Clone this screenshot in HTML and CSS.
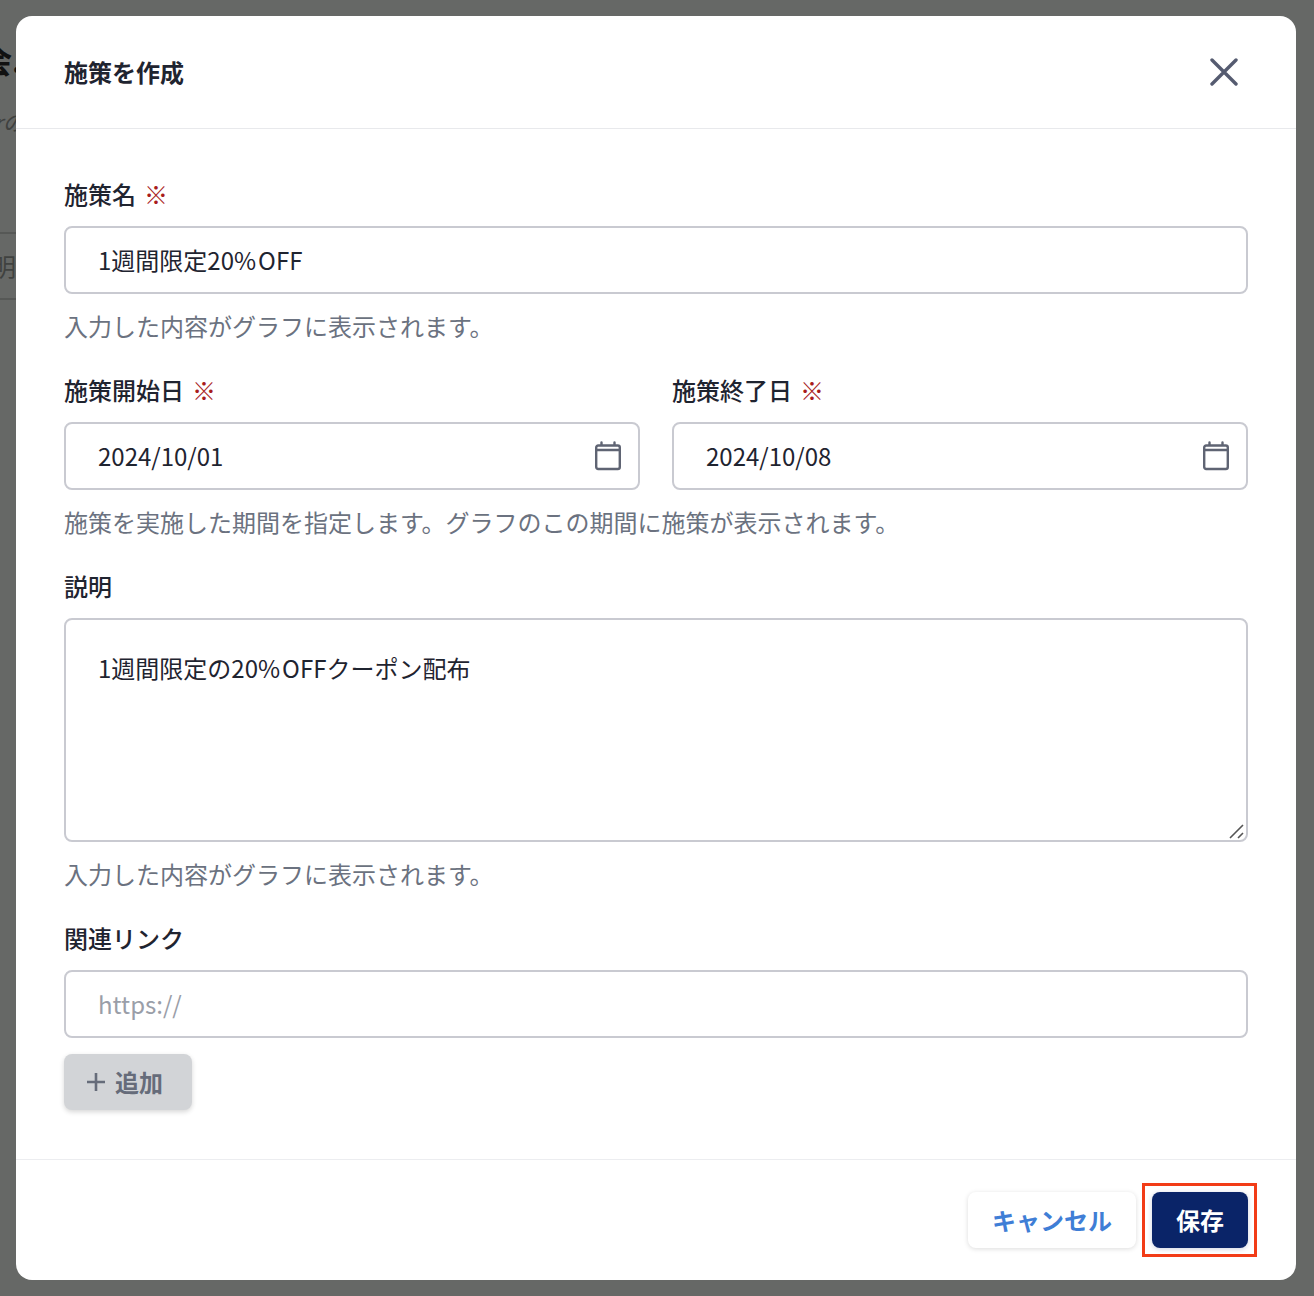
FILE: index.html
```html
<!DOCTYPE html>
<html lang="ja">
<head>
<meta charset="utf-8">
<title>施策を作成</title>
<link rel="stylesheet" href="styles.css">
</head>
<body>
<div class="backdrop">
  <span class="bg-title">会.</span>
  <span class="bg-note">rの</span>
  <div class="bg-row"><span>明</span></div>
</div>
<div class="modal-wrap">
  <div class="modal">
    <header class="modal-head">
      <h1 class="modal-title">施策を作成</h1>
      <svg class="close-icon" viewBox="0 0 28 28" width="28" height="28"><path d="M2 2 L26 26 M26 2 L2 26"/></svg>
    </header>
    <main class="modal-body">
      <section class="field">
        <div class="label">施策名<span class="req">※</span></div>
        <div class="input">1週間限定20<span class="pct">%</span>OFF</div>
        <p class="help">入力した内容がグラフに表示されます。</p>
      </section>
      <section class="field">
        <div class="date-row">
          <div class="date-col">
            <div class="label">施策開始日<span class="req">※</span></div>
            <div class="input input-date">2024/10/01
              <svg class="cal-icon" viewBox="0 0 28 30" width="28" height="30"><path d="M2.2 9V6.5a2 2 0 0 1 2-2h19.6a2 2 0 0 1 2 2V26a2 2 0 0 1-2 2H4.2a2 2 0 0 1-2-2V9h23.6M7.5 1.5v3M20.5 1.5v3"/></svg>
            </div>
          </div>
          <div class="date-col">
            <div class="label">施策終了日<span class="req">※</span></div>
            <div class="input input-date">2024/10/08
              <svg class="cal-icon" viewBox="0 0 28 30" width="28" height="30"><path d="M2.2 9V6.5a2 2 0 0 1 2-2h19.6a2 2 0 0 1 2 2V26a2 2 0 0 1-2 2H4.2a2 2 0 0 1-2-2V9h23.6M7.5 1.5v3M20.5 1.5v3"/></svg>
            </div>
          </div>
        </div>
        <p class="help">施策を実施した期間を指定します。グラフのこの期間に施策が表示されます。</p>
      </section>
      <section class="field">
        <div class="label">説明</div>
        <div class="input textarea">1週間限定の20<span class="pct">%</span>OFFクーポン配布
          <svg class="grip" viewBox="0 0 16 16" width="16" height="16"><path d="M1 15 L14 2 M9 15 L14 10"/></svg>
        </div>
        <p class="help">入力した内容がグラフに表示されます。</p>
      </section>
      <section class="field">
        <div class="label">関連リンク</div>
        <div class="input placeholder">https://</div>
        <button class="add-btn" type="button">
          <svg class="plus-icon" viewBox="0 0 20 20" width="20" height="20"><path d="M10 1V19M1 10H19"/></svg>追加
        </button>
      </section>
    </main>
    <footer class="modal-foot">
      <button class="btn btn-cancel" type="button">キャンセル</button>
      <button class="btn btn-save" type="button">保存<span class="highlight"></span></button>
    </footer>
  </div>
</div>
</body>
</html>
```
FILE: styles.css
```css
* { box-sizing: border-box; }
html, body { margin: 0; padding: 0; }
body {
  width: 1314px;
  height: 1296px;
  background: #666866;
  font-family: "Noto Sans CJK JP", "Noto Sans", sans-serif;
  font-size: 24px;
  color: #1f2430;
  position: relative;
  overflow: hidden;
}
.backdrop { position: absolute; inset: 0; overflow: hidden; }
.bg-title { position: absolute; left: -20px; top: 39px; font-size: 32px; line-height: 40px; font-weight: 700; color: #111; }
.bg-note { position: absolute; left: -6px; top: 106px; font-size: 22px; line-height: 30px; font-style: italic; color: #3f413f; }
.bg-row {
  position: absolute; left: 0; top: 232px; width: 20px; height: 68px;
  border-top: 2px solid #565856; border-bottom: 2px solid #565856;
  color: #404240; line-height: 64px; overflow: hidden;
}
.bg-row span { margin-left: -8px; }
.modal-wrap { position: relative; padding: 16px 18px 16px 16px; }
.modal {
  width: 1280px;
  height: 1264px;
  background: #fff;
  border-radius: 16px;
  display: flex;
  flex-direction: column;
}
.modal-head {
  height: 113px;
  flex: none;
  display: flex;
  align-items: center;
  justify-content: space-between;
  padding: 0 58px 0 48px;
  border-bottom: 1px solid #e8e9ec;
}
.modal-title { margin: 0; font-size: 24px; line-height: 36px; font-weight: 700; color: #1f2430; }
.close-icon { fill: none; stroke: #555b70; stroke-width: 3.4; stroke-linecap: round; display: block; }
.modal-body { flex: 1; padding: 47px 48px 0; }
.field { margin-bottom: 28px; }
.label { font-size: 24px; line-height: 36px; font-weight: 500; margin-bottom: 14px; color: #1f2430; }
.req { color: #a81c1c; margin-left: 8px; font-weight: 400; }
.input {
  height: 68px;
  border: 2px solid #c9cad1;
  border-radius: 8px;
  padding: 0 32px;
  font-size: 24px;
  line-height: 64px;
  color: #1f2430;
  background: #fff;
  position: relative;
}
.pct { letter-spacing: 2px; }
.date-row { display: flex; gap: 32px; }
.date-col { flex: 1; }
.cal-icon {
  position: absolute; right: 16px; top: 17px;
  fill: none; stroke: #5f6473; stroke-width: 2.4; stroke-linecap: round; stroke-linejoin: round;
}
.textarea { height: 224px; padding-top: 16px; }
.grip { position: absolute; right: 1px; bottom: 1px; fill: none; stroke: #555; stroke-width: 1.6; }
.placeholder { color: #9a9ea8; }
.help { margin: 14px 0 0; font-size: 24px; line-height: 36px; color: #6b7280; }
.add-btn {
  margin-top: 16px;
  width: 128px;
  height: 56px;
  border: 0;
  border-radius: 8px;
  background: #d2d4d7;
  box-shadow: 0 2px 5px rgba(0, 0, 0, .16);
  color: #666c7a;
  font: 700 24px/56px "Noto Sans CJK JP", sans-serif;
  display: flex;
  align-items: center;
  gap: 9px;
  padding: 0 0 0 22px;
}
.plus-icon { fill: none; stroke: #666c7a; stroke-width: 2.6; display: block; }
.modal-foot {
  height: 121px;
  flex: none;
  border-top: 1px solid #ecedf0;
  display: flex;
  justify-content: flex-end;
  align-items: flex-start;
  gap: 16px;
  padding: 32px 48px 0;
}
.btn {
  height: 56px;
  border: 0;
  border-radius: 8px;
  font: 700 24px/56px "Noto Sans CJK JP", sans-serif;
  padding: 0 24px;
}
.btn-cancel { background: #fff; color: #3f7ed6; box-shadow: 0 1px 5px rgba(0, 0, 0, .14); }
.btn-save { background: #0a2468; color: #fff; position: relative; box-shadow: 0 1px 5px rgba(10, 36, 104, .2); }
.highlight {
  position: absolute;
  left: -10px; top: -9px; right: -9px; bottom: -9px;
  border: 3px solid #f23c17;
}
```
